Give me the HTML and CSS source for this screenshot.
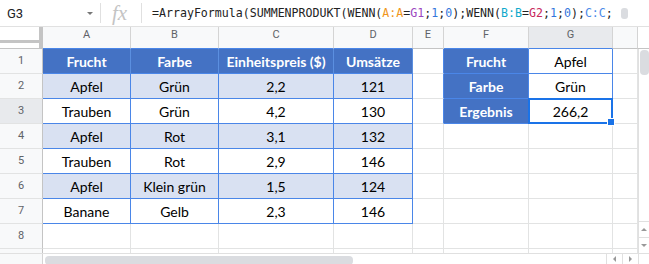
FILE: index.html
```html
<!doctype html>
<html lang="de">
  <head>
    <meta charset="UTF-8" />
    <title>SUMMENPRODUKT mit WENN</title>
    <link rel="stylesheet" href="styles.css">
  </head>
  <body>
    <div class="formula-bar">
      <div class="name-box"><span>G3</span><span class="caret"></span></div>
      <div class="divider"></div>
      <div class="fx">fx</div>
      <div class="divider"></div>
      <div class="formula">=ArrayFormula(SUMMENPRODUKT(WENN(<span class="ref-a">A:A</span>=<span class="ref-g1">G1</span>;<span class="num">1</span>;<span class="num">0</span>);WENN(<span class="ref-b">B:B</span>=<span class="ref-g2">G2</span>;<span class="num">1</span>;<span class="num">0</span>);<span class="ref-c">C:C</span>;</div>
      <div class="formula-thumb"></div>
    </div>

    <div class="row head">
      <div class="corner"></div>
      <div class="on-table">A</div>
      <div class="on-table">B</div>
      <div class="on-table">C</div>
      <div class="on-table">D</div>
      <div>E</div>
      <div class="on-table">F</div>
      <div class="on-table active">G</div>
      <div></div>
      <div class="blank"></div>
    </div>

    <div class="body">
      <div class="rows">
        <div class="row">
          <div class="rh">1</div>
          <div class="hd">Frucht</div>
          <div class="hd">Farbe</div>
          <div class="hd">Einheitspreis ($)</div>
          <div class="hd">Umsätze</div>
          <div class="edge"></div>
          <div class="hd">Frucht</div>
          <div class="tc">Apfel</div>
          <div></div>
        </div>
        <div class="row">
          <div class="rh">2</div>
          <div class="tc band">Apfel</div>
          <div class="tc band">Grün</div>
          <div class="tc band">2,2</div>
          <div class="tc band">121</div>
          <div class="edge"></div>
          <div class="hd">Farbe</div>
          <div class="tc">Grün</div>
          <div></div>
        </div>
        <div class="row">
          <div class="rh active">3</div>
          <div class="tc">Trauben</div>
          <div class="tc">Grün</div>
          <div class="tc">4,2</div>
          <div class="tc">130</div>
          <div class="edge"></div>
          <div class="hd">Ergebnis</div>
          <div class="tc sel">266,2</div>
          <div></div>
        </div>
        <div class="row">
          <div class="rh">4</div>
          <div class="tc band">Apfel</div>
          <div class="tc band">Rot</div>
          <div class="tc band">3,1</div>
          <div class="tc band">132</div>
          <div></div>
          <div></div>
          <div></div>
          <div></div>
        </div>
        <div class="row">
          <div class="rh">5</div>
          <div class="tc">Trauben</div>
          <div class="tc">Rot</div>
          <div class="tc">2,9</div>
          <div class="tc">146</div>
          <div></div>
          <div></div>
          <div></div>
          <div></div>
        </div>
        <div class="row">
          <div class="rh">6</div>
          <div class="tc band">Apfel</div>
          <div class="tc band">Klein grün</div>
          <div class="tc band">1,5</div>
          <div class="tc band">124</div>
          <div></div>
          <div></div>
          <div></div>
          <div></div>
        </div>
        <div class="row">
          <div class="rh">7</div>
          <div class="tc">Banane</div>
          <div class="tc">Gelb</div>
          <div class="tc">2,3</div>
          <div class="tc">146</div>
          <div></div>
          <div></div>
          <div></div>
          <div></div>
        </div>
        <div class="row">
          <div class="rh">8</div>
          <div></div>
          <div></div>
          <div></div>
          <div></div>
          <div></div>
          <div></div>
          <div></div>
          <div></div>
        </div>
        <div class="row part">
          <div class="rh"></div>
          <div></div>
          <div></div>
          <div></div>
          <div></div>
          <div></div>
          <div></div>
          <div></div>
          <div></div>
        </div>
      </div>

      <div class="vscroll">
        <div class="thumb"></div>
        <div class="arrow up"></div>
        <div class="arrow down"></div>
      </div>
    </div>

    <div class="hscroll">
      <div class="stub"></div>
      <div class="track"><div class="thumb"></div></div>
      <div class="arrow left"></div>
      <div class="arrow right"></div>
      <div class="end"></div>
    </div>
  </body>
</html>
```

FILE: styles.css
```css
* {
  box-sizing: border-box;
}
body {
  margin: 0;
  width: 649px;
  height: 264px;
  overflow: hidden;
  background: #fff;
  font-family: Roboto, 'Liberation Sans', sans-serif;
}

/* formula bar */
.formula-bar {
  display: flex;
  align-items: center;
  height: 27px;
  border-bottom: 1px solid #e1e1e1;
}
.name-box {
  width: 100px;
  display: flex;
  align-items: center;
  justify-content: space-between;
  padding: 0 7px;
  font-size: 13px;
  color: #202124;
}
.caret {
  width: 0;
  height: 0;
  border-left: 3px solid transparent;
  border-right: 3px solid transparent;
  border-top: 3px solid #777;
}
.divider {
  width: 1px;
  height: 20px;
  background: #e0e0e0;
}
.fx {
  width: 40px;
  text-align: center;
  font-family: 'Liberation Serif', serif;
  font-style: italic;
  font-size: 21px;
  color: #c4c4c4;
  line-height: 20px;
  padding-right: 3px;
}
.formula {
  flex: 1;
  padding-left: 10px;
  white-space: nowrap;
  overflow: hidden;
  font-family: 'DejaVu Sans Mono', monospace;
  font-size: 11.6px;
  color: #222;
  padding-bottom: 1px;
}
.ref-a { color: #f0961c; }
.ref-g1 { color: #9b46c0; }
.ref-b { color: #11a9cc; }
.ref-g2 { color: #c8285a; }
.ref-c { color: #4a8ae8; }
.num { color: #3476dc; }
.formula-thumb {
  width: 7px;
  height: 11px;
  margin: 0 21px 0 4px;
  border-radius: 3px;
  background: #dadce0;
}

/* grid */
.row {
  display: grid;
  grid-template-columns: 43px 88px 88px 115px 79px 31px 85px 84px 25px;
  height: 25px;
}
.row > div {
  display: flex;
  align-items: center;
  justify-content: center;
  padding-top: 1px;
  border-right: 1px solid #e2e3e3;
  border-bottom: 1px solid #e2e3e3;
  font-family: Lato, 'Open Sans', sans-serif;
  font-size: 14px;
  color: #000;
}
.row.head {
  grid-template-columns: 43px 88px 88px 115px 79px 31px 85px 84px 25px 11px;
  height: 22px;
}
.row.head > div {
  align-items: flex-start;
  padding-top: 0;
  line-height: 16px;
  background: #f8f9fa;
  border-right-color: #d4d4d4;
  border-bottom-color: #c4c4c4;
  font-family: Roboto, sans-serif;
  font-size: 11px;
  color: #5f6368;
}
.row.head > .active {
  background: #e8eaed;
}
.row.head > .on-table {
  border-bottom-color: #4a86e8;
}
.row.head > .blank {
  background: #fff;
  border-right: none;
}
.row.head > .corner {
  display: block;
  background: #fff;
  border-right: 4px solid #c4c4c4;
}
.corner::before {
  content: '';
  display: block;
  height: 3px;
  margin-top: 13px;
  background: #c4c4c4;
}
.row.part {
  height: 4px;
}
.row.part > div {
  border-bottom: none;
}

.row > .rh {
  background: #f8f9fa;
  border-right-color: #c4c4c4;
  font-family: Roboto, sans-serif;
  font-size: 11px;
  color: #5f6368;
  padding-top: 0;
  padding-bottom: 1px;
}
.row > .rh.active {
  background: #e8eaed;
}
.row > .hd {
  background: #4472c4;
  color: #fff;
  font-weight: bold;
  border-right-color: #5b8fe0;
  border-bottom-color: #4a86e8;
}
.row > .tc {
  border-right-color: #4a86e8;
  border-bottom-color: #4a86e8;
}
.row > .band {
  background: #d9e1f2;
}
.row > .edge {
  border-right-color: #4a86e8;
}
.row > .hd:nth-child(7) {
  border-right-color: #4a86e8;
}

/* selected cell */
.sel {
  position: relative;
}
.sel::after {
  content: '';
  position: absolute;
  top: -1px;
  left: -1px;
  right: -1px;
  bottom: -1px;
  border: 2px solid #1a73e8;
  z-index: 1;
}
.sel::before {
  content: '';
  position: absolute;
  right: -3px;
  bottom: -3px;
  width: 6px;
  height: 6px;
  background: #1a73e8;
  border: 1px solid #fff;
  z-index: 2;
}

/* scrollbars */
.body {
  display: flex;
}
.vscroll {
  width: 11px;
  display: flex;
  flex-direction: column;
  border-left: 1px solid #e0e0e0;
  background: #fff;
}
.vscroll .thumb {
  height: 25px;
  margin: 1px 0 0 1px;
  border-radius: 4px;
  background: #dadce0;
}
.vscroll .arrow {
  height: 16px;
  border-top: 1px solid #e0e0e0;
  display: flex;
  align-items: center;
  justify-content: center;
}
.vscroll .up {
  margin-top: auto;
}
.arrow::before {
  content: '';
  width: 0;
  height: 0;
  border: 3px solid transparent;
}
.up::before {
  border-bottom: 3px solid #999;
  border-top-width: 0;
}
.down::before {
  border-top: 3px solid #999;
  border-bottom-width: 0;
}
.left::before {
  border-right: 3px solid #999;
  border-left-width: 0;
}
.right::before {
  border-left: 3px solid #999;
  border-right-width: 0;
}

.hscroll {
  display: flex;
  height: 11px;
  border-top: 1px solid #e0e0e0;
}
.hscroll .stub {
  width: 43px;
  background: #f8f9fa;
  border-right: 1px solid #d4d4d4;
}
.hscroll .track {
  flex: 1;
  padding: 2px 0 0 2px;
}
.hscroll .thumb {
  width: 308px;
  height: 9px;
  border-radius: 4px;
  background: #dadce0;
}
.hscroll .arrow {
  width: 16px;
  border-left: 1px solid #e0e0e0;
  display: flex;
  align-items: center;
  justify-content: center;
}
.hscroll .end {
  width: 11px;
  border-left: 1px solid #e0e0e0;
}
```
